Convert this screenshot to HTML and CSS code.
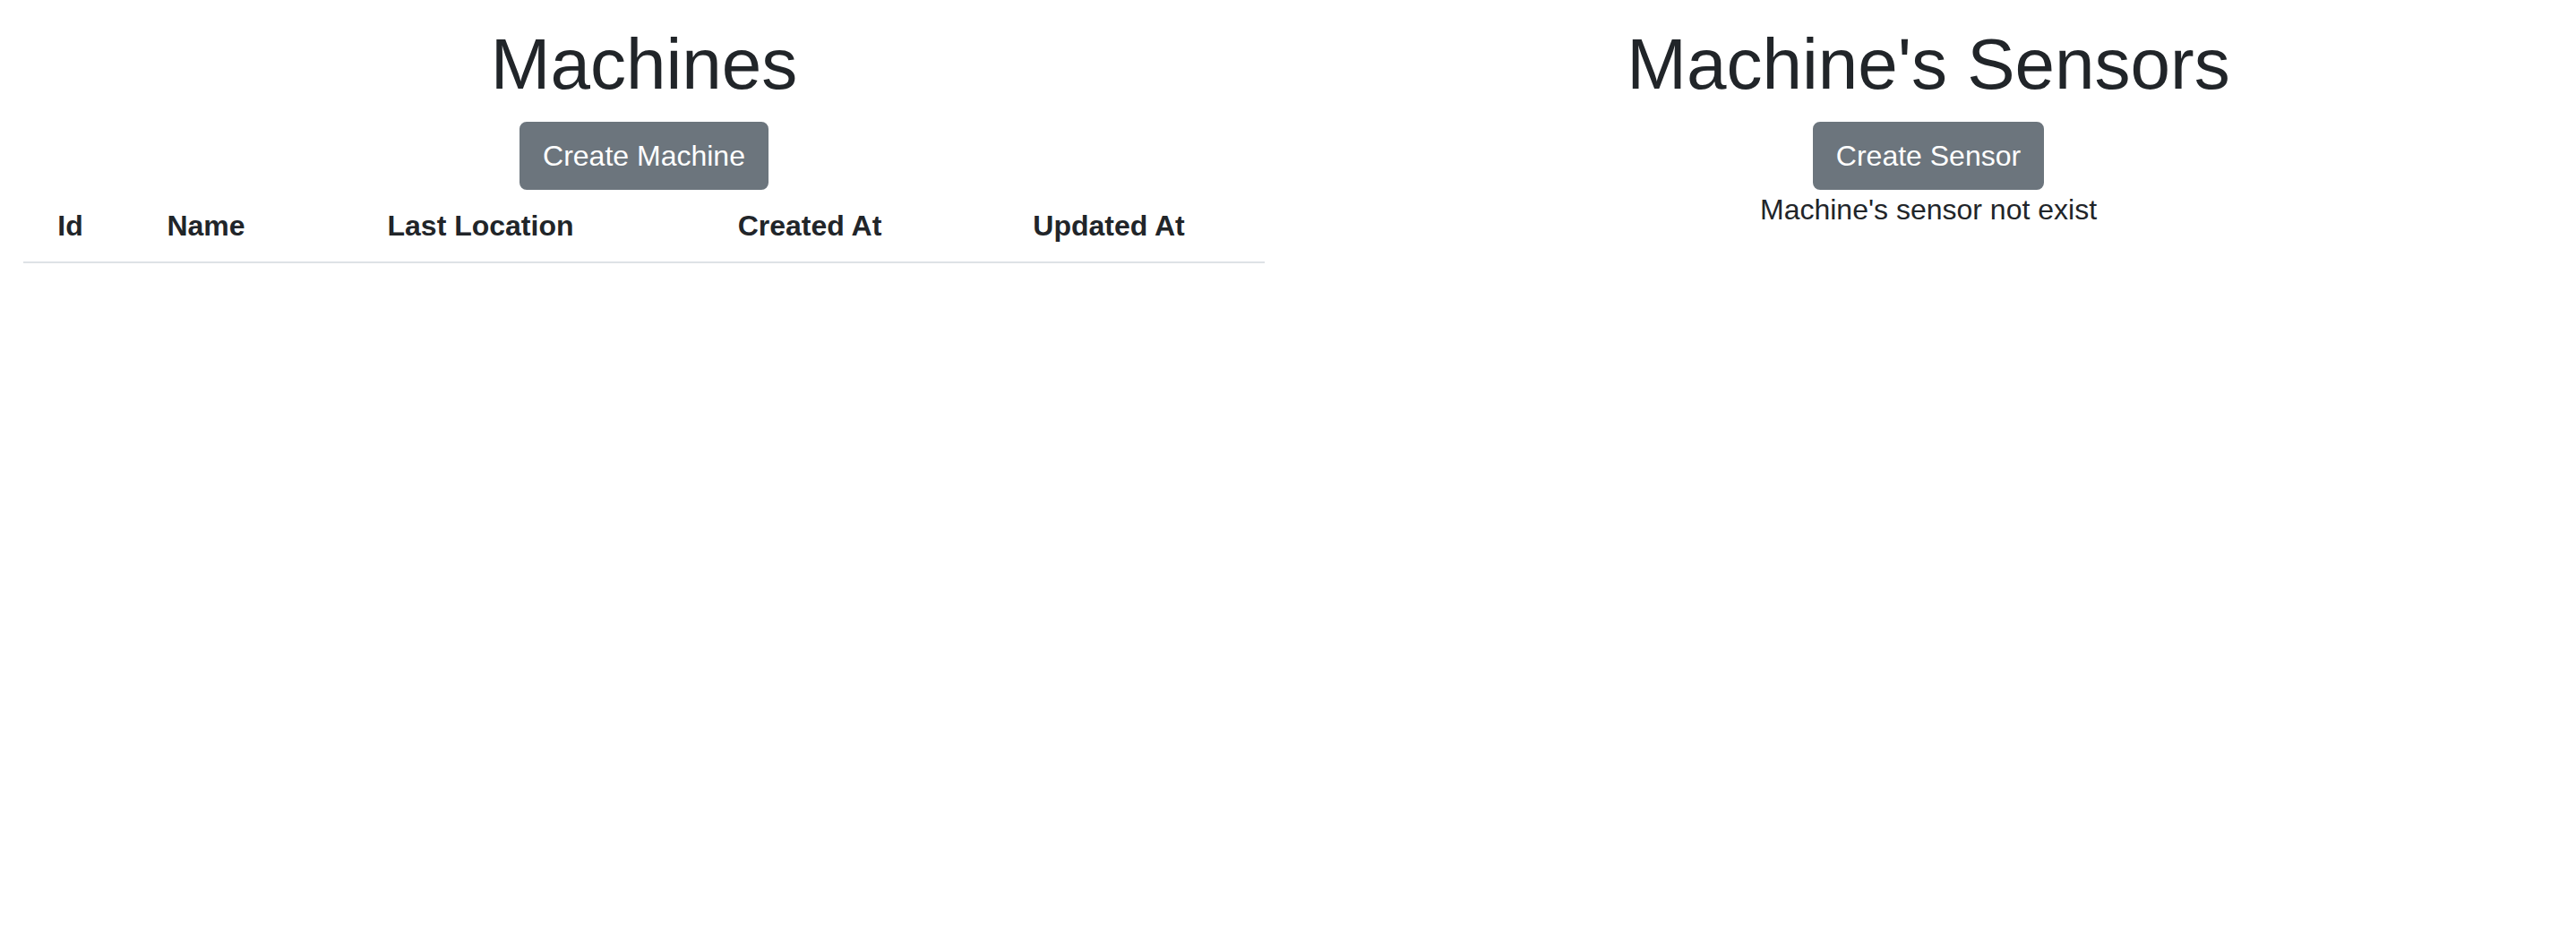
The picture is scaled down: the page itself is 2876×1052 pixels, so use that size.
FILE: index.html
```html
<!DOCTYPE html>
<html lang="en">
<head>
<meta charset="utf-8">
<title>Machines</title>
<link rel="stylesheet" href="styles.css">
</head>
<body>
<div class="layout">
  <section class="panel">
    <h1 class="title">Machines</h1>
    <div class="actions"><button class="btn">Create Machine</button></div>
    <table class="table">
      <colgroup>
        <col class="c-id"><col class="c-name"><col class="c-loc"><col class="c-created"><col class="c-updated">
      </colgroup>
      <thead>
        <tr><th>Id</th><th>Name</th><th>Last Location</th><th>Created At</th><th>Updated At</th></tr>
      </thead>
      <tbody></tbody>
    </table>
  </section>
  <section class="panel panel-right">
    <h1 class="title">Machine's Sensors</h1>
    <div class="actions"><button class="btn">Create Sensor</button></div>
    <p class="empty">Machine's sensor not exist</p>
  </section>
</div>
</body>
</html>
```
FILE: styles.css
```css
html, body {
  margin: 0;
  padding: 0;
  background: #ffffff;
}
body {
  font-family: "Liberation Sans", Arial, Helvetica, sans-serif;
  font-size: 32px;
  line-height: 1.5;
  color: #212529;
}
.layout {
  display: grid;
  grid-template-columns: 1fr 1fr;
}
.panel {
  text-align: center;
  padding-top: 24px;
}
.panel-right {
  padding-right: 8px;
}
.title {
  margin: 0 0 16px;
  font-size: 80px;
  font-weight: 400;
  line-height: 1.2;
  color: #212529;
}
.actions {
  display: flex;
  justify-content: center;
}
.btn {
  font-family: inherit;
  font-size: 32px;
  line-height: 48px;
  padding: 12px 24px;
  border: 2px solid #6c757d;
  border-radius: 8px;
  background: #6c757d;
  color: #ffffff;
  cursor: pointer;
}
.table {
  width: calc(100% - 52px);
  margin: 0 26px;
  border-collapse: collapse;
  table-layout: fixed;
}
.c-id { width: 105px; }
.c-name { width: 198px; }
.c-loc { width: 415px; }
.c-created { width: 320px; }
.c-updated { width: auto; }
.table th {
  padding: 16px;
  font-weight: 700;
  font-size: 32px;
  line-height: 48px;
  text-align: center;
  border-bottom: 2px solid #dee2e6;
  white-space: nowrap;
}
.empty {
  margin: 0;
  font-size: 32px;
  line-height: 44px;
}
```
